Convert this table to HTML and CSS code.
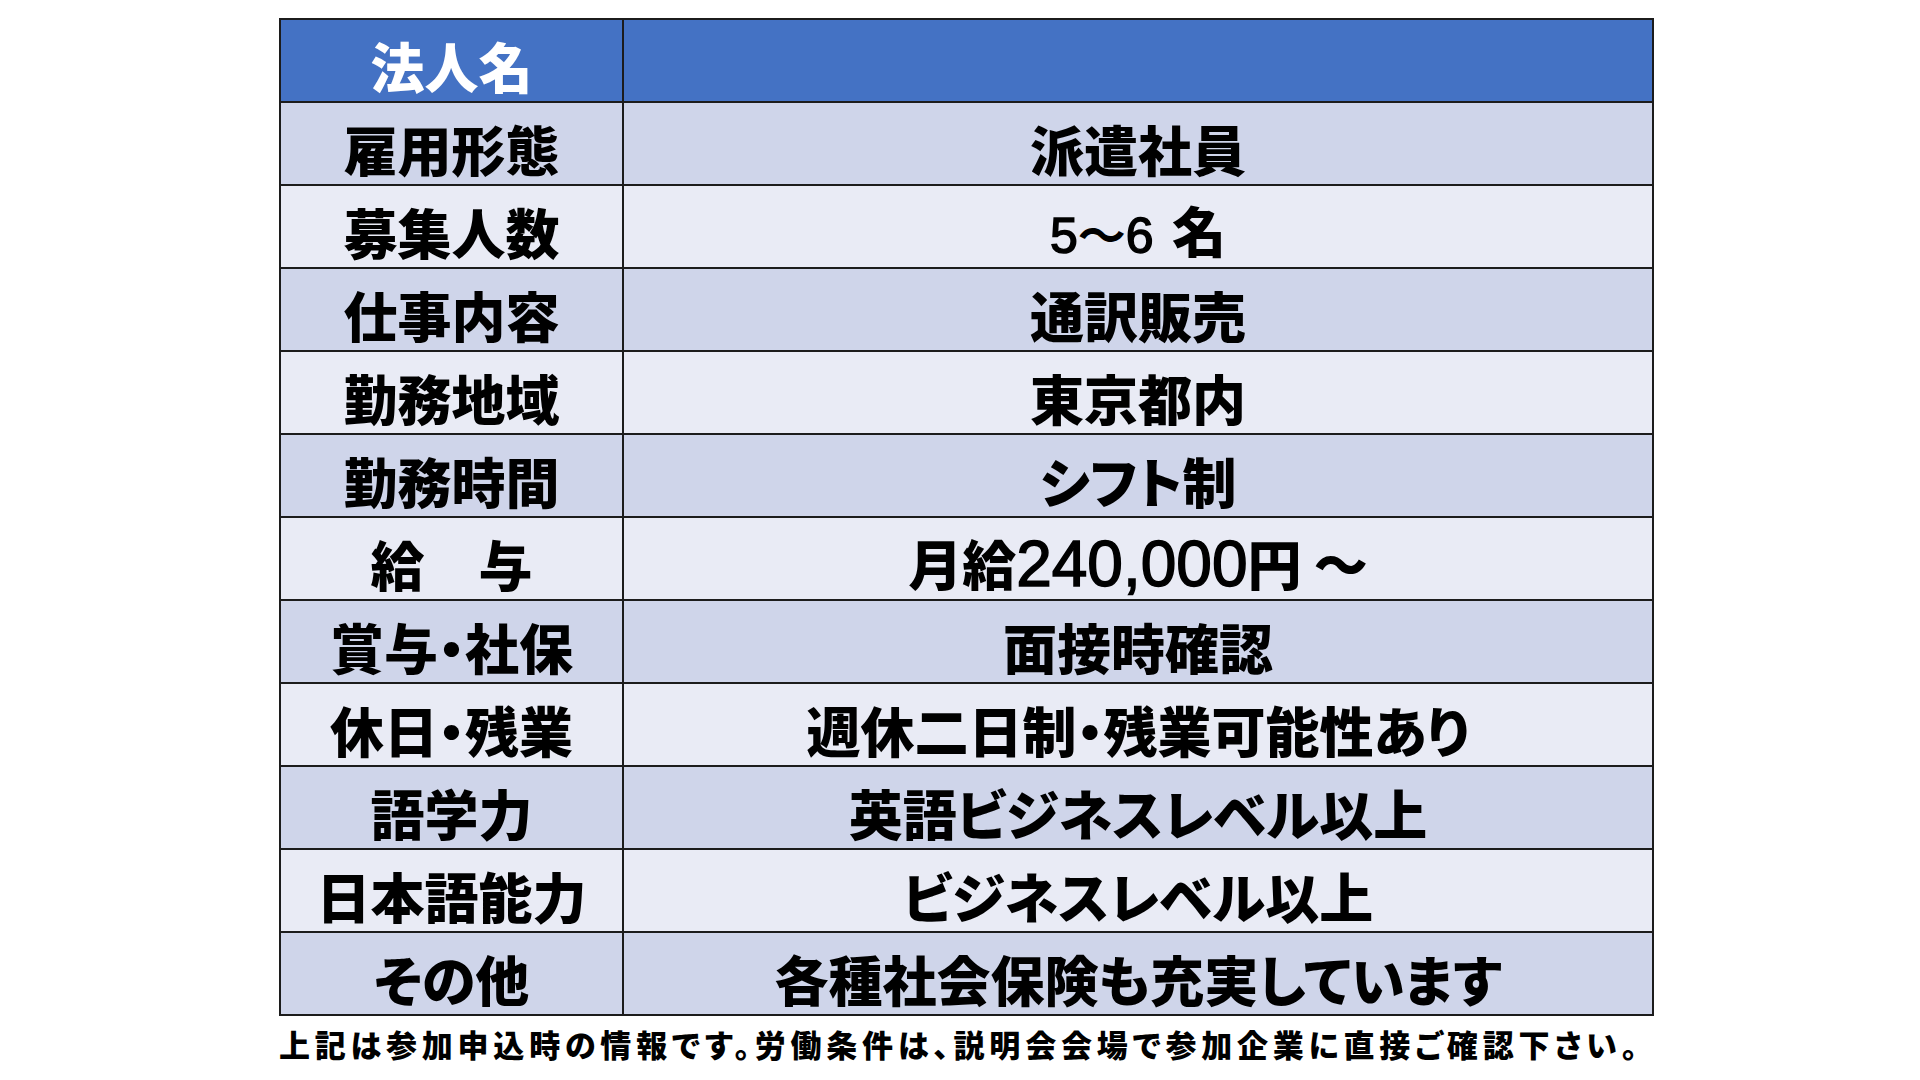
FILE: index.html
```html
<!DOCTYPE html>
<html lang="ja">
<head>
<meta charset="utf-8">
<title>求人情報</title>
<link rel="stylesheet" href="styles.css">
</head>
<body>
<main class="sheet">
  <table class="jobs">
    <colgroup>
      <col class="col-label">
      <col class="col-value">
    </colgroup>
    <thead>
      <tr class="head">
        <th>法人名</th>
        <th></th>
      </tr>
    </thead>
    <tbody>
      <tr><td>雇用形態</td><td>派遣社員</td></tr>
      <tr><td>募集人数</td><td><span class="num num-sm">5</span><span class="wave">～</span><span class="num num-sm gap">6</span> 名</td></tr>
      <tr><td>仕事内容</td><td>通訳販売</td></tr>
      <tr><td>勤務地域</td><td>東京都内</td></tr>
      <tr><td>勤務時間</td><td>シフト制</td></tr>
      <tr><td>給　与</td><td>月給<span class="num num-lg">240,000</span>円 ～</td></tr>
      <tr><td>賞与・社保</td><td>面接時確認</td></tr>
      <tr><td>休日・残業</td><td>週休二日制・残業可能性あり</td></tr>
      <tr><td>語学力</td><td>英語ビジネスレベル以上</td></tr>
      <tr><td>日本語能力</td><td>ビジネスレベル以上</td></tr>
      <tr><td>その他</td><td>各種社会保険も充実しています</td></tr>
    </tbody>
  </table>
  <p class="note">上記は参加申込時の情報です。労働条件は、説明会会場で参加企業に直接ご確認下さい。</p>
</main>
</body>
</html>
```

FILE: styles.css
```css
html, body {
  margin: 0;
  padding: 0;
  background: #ffffff;
}

body {
  width: 1920px;
  height: 1080px;
  overflow: hidden;
  font-family: "Noto Sans CJK JP", sans-serif;
  color: #000000;
}

.sheet {
  padding: 18px 0 0 279px;
}

.jobs {
  width: 1375px;
  border-collapse: collapse;
  table-layout: fixed;
  border: 2px solid #1c1c1c;
}

.col-label {
  width: 343px;
}

.jobs th,
.jobs td {
  height: 83px;
  padding: 11px 0 0 0;
  box-sizing: border-box;
  border: 2px solid #1c1c1c;
  text-align: center;
  vertical-align: middle;
  font-size: 54px;
  font-weight: 900;
  line-height: 1;
  white-space: nowrap;
  font-feature-settings: "palt" 1;
}

.head th {
  background: #4472c4;
  color: #ffffff;
}

.jobs tbody tr:nth-child(odd) td {
  background: #cfd5ea;
}

.jobs tbody tr:nth-child(even) td {
  background: #e9ebf5;
}

.num {
  font-family: "Liberation Sans", sans-serif;
  font-weight: 400;
  -webkit-text-stroke: 1.5px #000000;
}

.num-sm {
  font-size: 50px;
}

.wave {
  font-size: 48px;
  font-weight: 700;
}

.gap {
  margin-right: 6px;
}

.num-lg {
  font-size: 64px;
}

.note {
  margin: 9px 0 0 0;
  font-size: 31px;
  font-weight: 900;
  letter-spacing: 4.8px;
  line-height: 1.2;
  white-space: nowrap;
  font-feature-settings: "palt" 1;
}
```
